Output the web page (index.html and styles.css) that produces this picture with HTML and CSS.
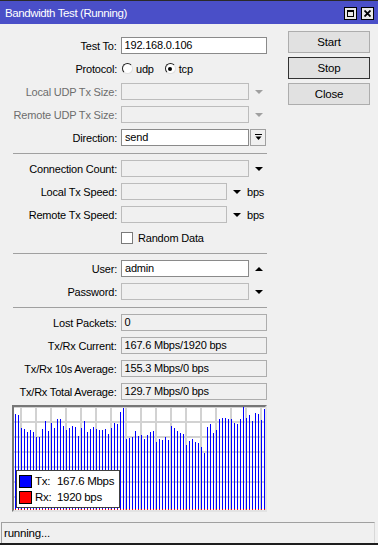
FILE: index.html
```html
<!DOCTYPE html>
<html lang="en">
<head>
    <meta charset="UTF-8">
    <title>Bandwidth Test</title>
    <link rel="stylesheet" href="styles.css">
</head>
<body>
<div class="window">
    <div class="titlebar">
        <span class="title">Bandwidth Test (Running)</span>
        <div class="win-buttons">
            <span class="wbtn"><span class="max-icon"></span></span>
            <span class="wbtn">
                <svg width="7" height="7" viewBox="0 0 7 7"><path d="M0.5 0.5 L6.5 6.5 M6.5 0.5 L0.5 6.5" stroke="#000" stroke-width="1.8"/></svg>
            </span>
        </div>
    </div>

    <div class="content">
        <div class="form">
            <div class="row">
                <span class="label">Test To:</span>
                <span class="field">192.168.0.106</span>
            </div>
            <div class="row">
                <span class="label">Protocol:</span>
                <span class="radio"></span><span class="opt">udp</span>
                <span class="radio checked"></span><span class="opt">tcp</span>
            </div>
            <div class="row">
                <span class="label off">Local UDP Tx Size:</span>
                <span class="field short disabled"></span>
                <span class="arrow down grey"></span>
            </div>
            <div class="row">
                <span class="label off">Remote UDP Tx Size:</span>
                <span class="field short disabled"></span>
                <span class="arrow down grey"></span>
            </div>
            <div class="row">
                <span class="label">Direction:</span>
                <span class="field short">send</span>
                <span class="drop-btn">
                    <svg width="7" height="7" viewBox="0 0 7 7"><path d="M0 0.5 H7" stroke="#000" stroke-width="1"/><path d="M0.5 2.5 H6.5 L3.5 6 Z" fill="#000"/></svg>
                </span>
            </div>

            <div class="sep"></div>

            <div class="row">
                <span class="label">Connection Count:</span>
                <span class="field short disabled"></span>
                <span class="arrow down"></span>
            </div>
            <div class="row">
                <span class="label">Local Tx Speed:</span>
                <span class="field shorter disabled"></span>
                <span class="arrow down"></span>
                <span class="unit">bps</span>
            </div>
            <div class="row">
                <span class="label">Remote Tx Speed:</span>
                <span class="field shorter disabled"></span>
                <span class="arrow down"></span>
                <span class="unit">bps</span>
            </div>
            <div class="row">
                <span class="label"></span>
                <span class="checkbox"></span>
                <span class="opt">Random Data</span>
            </div>

            <div class="sep"></div>

            <div class="row">
                <span class="label">User:</span>
                <span class="field short">admin</span>
                <span class="arrow up"></span>
            </div>
            <div class="row">
                <span class="label">Password:</span>
                <span class="field short disabled"></span>
                <span class="arrow down"></span>
            </div>

            <div class="sep"></div>

            <div class="row">
                <span class="label">Lost Packets:</span>
                <span class="field readonly">0</span>
            </div>
            <div class="row">
                <span class="label">Tx/Rx Current:</span>
                <span class="field readonly">167.6 Mbps/1920 bps</span>
            </div>
            <div class="row">
                <span class="label">Tx/Rx 10s Average:</span>
                <span class="field readonly">155.3 Mbps/0 bps</span>
            </div>
            <div class="row">
                <span class="label">Tx/Rx Total Average:</span>
                <span class="field readonly">129.7 Mbps/0 bps</span>
            </div>

            <div class="chart">
                <div class="bars" id="bars"></div>
                <div class="legend">
                    <div class="legend-row">
                        <span class="swatch tx"></span>
                        <span class="legend-key">Tx:</span>
                        <span>167.6 Mbps</span>
                    </div>
                    <div class="legend-row">
                        <span class="swatch rx"></span>
                        <span class="legend-key">Rx:</span>
                        <span>1920 bps</span>
                    </div>
                </div>
            </div>
        </div>

        <div class="actions">
            <button class="btn">Start</button>
            <button class="btn default">Stop</button>
            <button class="btn">Close</button>
        </div>
    </div>

    <div class="status">running...</div>
</div>
<script>
    (function () {
        // tx history, bar heights in px
        let history = [
            96, 95, 82, 81, 78, 80, 78, 73, 73, 81,
            89, 79, 87, 82, 91, 91, 84, 80, 82, 84,
            83, 74, 82, 89, 78, 81, 83, 81, 80, 80,
            81, 76, 82, 87, 86, 98, 102, 71, 72, 73,
            79, 74, 75, 71, 75, 78, 79, 68, 71, 70,
            73, 70, 84, 82, 79, 77, 76, 65, 69, 71,
            68, 67, 63, 57, 83, 86, 77, 80, 91, 92,
            92, 91, 91, 87, 86, 91, 103, 92, 95, 89,
            97, 96, 90, 101
        ];
        let box = document.getElementById('bars');
        history.forEach(h => {
            let bar = document.createElement('span');
            bar.className = 'bar';
            bar.style.height = (h - 1) + 'px';
            box.appendChild(bar);
        });
    })()
</script>
</body>
</html>
```

FILE: styles.css
```css
body {
    margin: 0;
    background: #f0f0f0;
    font-family: "Liberation Sans", Arial, sans-serif;
    font-size: 11px;
    letter-spacing: -0.2px;
    color: #000;
}

.window {
    width: 378px;
    height: 545px;
    box-sizing: border-box;
    display: flex;
    flex-direction: column;
    border-bottom: 2px solid #1e1e1e;
}

.titlebar {
    height: 23px;
    border-top: 1px solid #2a2a2a;
    background: #4a4fc8;
    display: flex;
    align-items: center;
    padding: 0 4px 0 5px;
    color: #fff;
    font-size: 11.5px;
    letter-spacing: -0.4px;
}

.title {
    flex: 1;
    padding-top: 1px;
}

.win-buttons {
    display: flex;
    gap: 4px;
    margin-top: 2px;
}

.wbtn {
    width: 13px;
    height: 13px;
    box-sizing: border-box;
    border: 1px solid #000;
    background: #e8e8e8;
    display: flex;
    align-items: center;
    justify-content: center;
}

.max-icon {
    width: 7px;
    height: 7px;
    box-sizing: border-box;
    border: 1px solid #000;
    border-top-width: 2px;
}

.content {
    display: flex;
    padding-top: 7px;
}

.form {
    width: 267px;
    padding-top: 6px;
}

.row {
    display: flex;
    align-items: center;
    height: 17px;
    margin-bottom: 6px;
}

.label {
    width: 117px;
    margin-right: 4px;
    text-align: right;
    white-space: nowrap;
}

.label.off {
    color: #6d6d6d;
}

.field {
    box-sizing: border-box;
    width: 147px;
    height: 17px;
    border: 1px solid #8a8a8a;
    background: #fff;
    padding: 0 3px;
    line-height: 15px;
    white-space: nowrap;
}

.field.short {
    width: 128px;
}

.field.shorter {
    width: 106px;
}

.field.disabled {
    background: #f0f0f0;
    border-color: #bcbcbc;
}

.field.readonly {
    background: #f0f0f0;
    border-color: #adadad;
}

.arrow {
    width: 0;
    height: 0;
    margin-left: 6px;
    border-left: 4px solid transparent;
    border-right: 4px solid transparent;
}

.arrow.down {
    border-top: 4px solid #000;
}

.arrow.up {
    border-bottom: 4px solid #000;
}

.arrow.down.grey {
    border-top-color: #a0a0a0;
}

.unit {
    margin-left: 6px;
}

.drop-btn {
    box-sizing: border-box;
    width: 16px;
    height: 17px;
    margin-left: 1px;
    border: 1px solid #a0a0a0;
    background: #f0f0f0;
    display: flex;
    align-items: center;
    justify-content: center;
}

.radio {
    width: 11px;
    height: 11px;
    box-sizing: border-box;
    margin-left: 1px;
    border-radius: 50%;
    border: 1px solid;
    border-color: #222 #e0e0e0 #e0e0e0 #222;
    background: #fff;
    display: flex;
    align-items: center;
    justify-content: center;
}

.radio.checked::after {
    content: "";
    width: 4px;
    height: 4px;
    border-radius: 50%;
    background: #000;
}

.opt {
    margin-left: 3px;
    margin-right: 10px;
}

.checkbox {
    width: 12px;
    height: 12px;
    box-sizing: border-box;
    border: 1px solid #7a7a7a;
    background: #fff;
    margin-right: 2px;
}

/* margin-top collapses with the row above: 7px puts the line 1px lower */
.sep {
    height: 1px;
    background: #a0a0a0;
    margin: 7px 0 6px 13px;
}

.chart {
    position: relative;
    box-sizing: border-box;
    width: 255px;
    height: 107px;
    margin: -1px 0 0 12px;
    border: 2px solid;
    border-color: #777 #e3e3e3 #e3e3e3 #777;
    background-color: #fff;
    background-image:
        linear-gradient(to right, #d2d2d2 2px, transparent 2px),
        linear-gradient(to bottom, #d2d2d2 2px, transparent 2px);
    background-size: 15px 15px;
    background-position: 6px -1px;
}

.bars {
    position: absolute;
    left: 1px;
    bottom: 0;
    display: flex;
    align-items: flex-end;
    gap: 2px;
}

.bar {
    width: 1px;
    background: #0000ff;
    border-bottom: 1px solid #ff0000;
}

.legend {
    position: absolute;
    left: 2px;
    top: 63px;
    width: 104px;
    height: 38px;
    box-sizing: border-box;
    border: 1px solid #404040;
    background: #fff;
    padding: 2px 0 0 2px;
    font-size: 11.5px;
    letter-spacing: -0.3px;
}

.legend-row {
    display: flex;
    align-items: center;
    height: 16px;
}

.swatch {
    width: 13px;
    height: 13px;
    box-sizing: border-box;
    border: 1px solid #000;
    margin-right: 3px;
}

.swatch.tx {
    background: #0000ff;
}

.swatch.rx {
    background: #ff0000;
}

.legend-key {
    width: 22px;
}

.actions {
    width: 82px;
    margin-left: 21px;
    display: flex;
    flex-direction: column;
    gap: 4px;
}

.btn {
    height: 22px;
    box-sizing: border-box;
    border: 1px solid #adadad;
    background: #e1e1e1;
    padding: 0;
    font-family: inherit;
    font-size: 11.5px;
    letter-spacing: -0.2px;
    color: #000;
}

.btn.default {
    border-color: #333;
}

.status {
    margin: auto 3px 0 1px;
    height: 21px;
    box-sizing: border-box;
    border-top: 1px solid #a0a0a0;
    border-left: 1px solid #a0a0a0;
    border-right: 1px solid #d8d8d8;
    padding-left: 2px;
    line-height: 20px;
    font-size: 11.5px;
}
```
